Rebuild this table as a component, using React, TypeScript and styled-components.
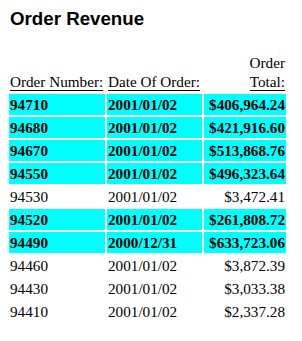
import styled, { createGlobalStyle } from "styled-components";

const GlobalStyle = createGlobalStyle`
    body{
        margin: 0;
        background: #ffffff;
    }
`

const ordersList = [
    { number: "94710", date: "2001/01/02", total: "$406,964.24", big: true },
    { number: "94680", date: "2001/01/02", total: "$421,916.60", big: true },
    { number: "94670", date: "2001/01/02", total: "$513,868.76", big: true },
    { number: "94550", date: "2001/01/02", total: "$496,323.64", big: true },
    { number: "94530", date: "2001/01/02", total: "$3,472.41", big: false },
    { number: "94520", date: "2001/01/02", total: "$261,808.72", big: true },
    { number: "94490", date: "2000/12/31", total: "$633,723.06", big: true },
    { number: "94460", date: "2001/01/02", total: "$3,872.39", big: false },
    { number: "94430", date: "2001/01/02", total: "$3,033.38", big: false },
    { number: "94410", date: "2001/01/02", total: "$2,337.28", big: false },
]

const StyledPage = styled.div`
    padding: 8px 7px;
    color: #000000;
`

const Title = styled.h3`
    font-family: "Liberation Sans", Arial, sans-serif;
    font-size: 18.72px;
    font-weight: 700;
    margin: 0 0 20px 3px;
`

const Table = styled.table`
    table-layout: fixed;
    width: 281px;
    border-spacing: 2px;
    font-family: "Liberation Serif", "Times New Roman", serif;
    font-size: 15.2px;
    line-height: 19px;
`

const HeadCell = styled.th<{ $right?: boolean }>`
    padding: 1px;
    font-weight: 400;
    white-space: nowrap;
    vertical-align: bottom;
    text-align: ${(p) => (p.$right ? "right" : "left")};
`

const Underlined = styled.span`
    text-decoration: underline;
    text-underline-offset: 3px;
`

const Cell = styled.td<{ $big: boolean; $right?: boolean }>`
    padding: 1px;
    height: 19px;
    white-space: nowrap;
    background: ${(p) => (p.$big ? "#00ffff" : "transparent")};
    font-weight: ${(p) => (p.$big ? 700 : 400)};
    text-align: ${(p) => (p.$right ? "right" : "left")};
`

function App(){

    return(
        <StyledPage>
            <GlobalStyle/>
            <Title>Order Revenue</Title>

            <Table>
                <colgroup>
                    <col style={{ width: 96 }}/>
                    <col style={{ width: 95 }}/>
                    <col style={{ width: 82 }}/>
                </colgroup>
                <thead>
                    <tr>
                        <HeadCell><Underlined>Order Number:</Underlined></HeadCell>
                        <HeadCell><Underlined>Date Of Order:</Underlined></HeadCell>
                        <HeadCell $right>Order<br/><Underlined>Total:</Underlined></HeadCell>
                    </tr>
                </thead>
                <tbody>
                    {
                        ordersList.map((order) => (
                            <tr key={order.number}>
                                <Cell $big={order.big}>{order.number}</Cell>
                                <Cell $big={order.big}>{order.date}</Cell>
                                <Cell $big={order.big} $right>{order.total}</Cell>
                            </tr>
                        ))
                    }
                </tbody>
            </Table>
        </StyledPage>
    )
}

export default App
